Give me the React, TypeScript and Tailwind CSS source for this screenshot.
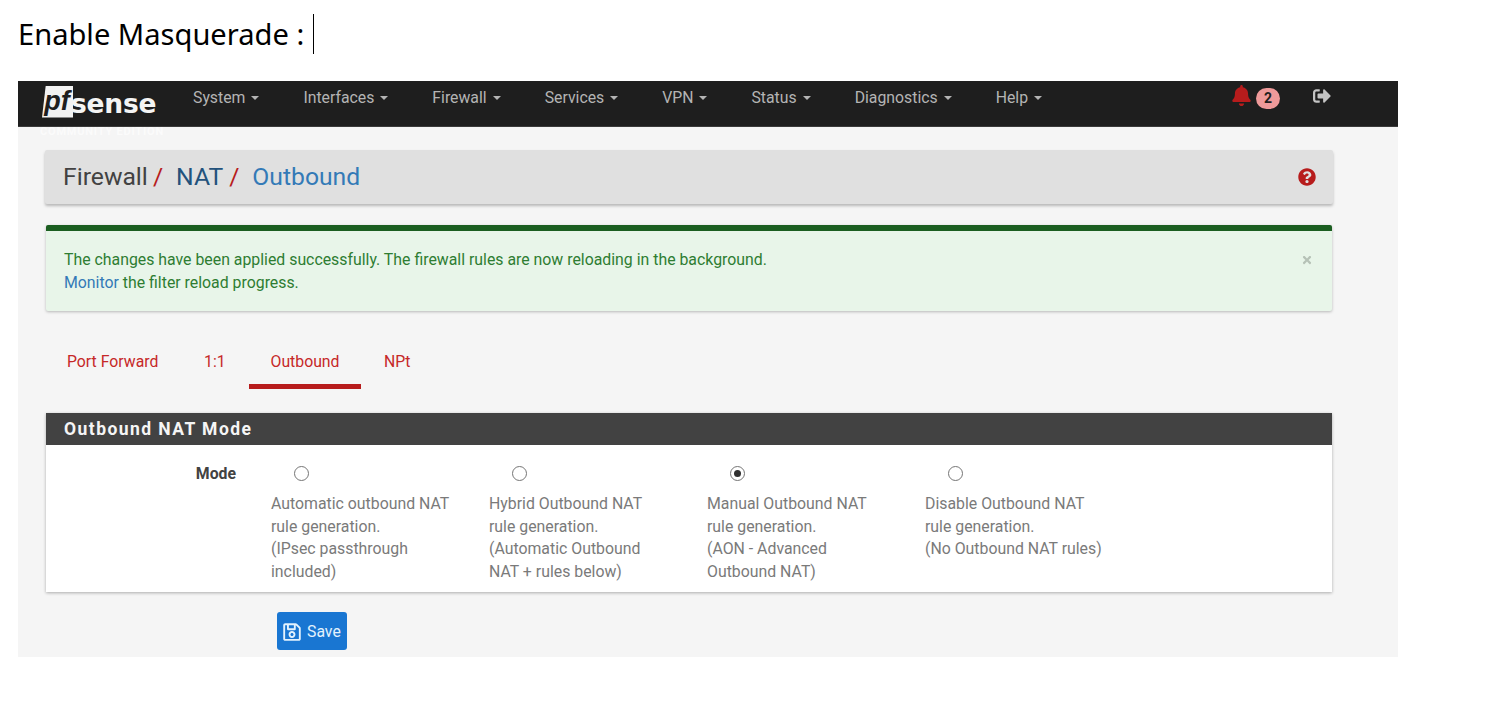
import React from "react";
import { FaBell, FaQuestionCircle, FaSignOutAlt, FaTimes, FaRegSave } from "react-icons/fa";

const navItems: [string, string][] = [
  ["System", "ml-[36px]"],
  ["Interfaces", "ml-[44px]"],
  ["Firewall", "ml-[44px]"],
  ["Services", "ml-[44px]"],
  ["VPN", "ml-[44px]"],
  ["Status", "ml-[44px]"],
  ["Diagnostics", "ml-[44px]"],
  ["Help", "ml-[44px]"],
];

const modes = [
  { lines: ["Automatic outbound NAT", "rule generation.", "(IPsec passthrough", "included)"], checked: false },
  { lines: ["Hybrid Outbound NAT", "rule generation.", "(Automatic Outbound", "NAT + rules below)"], checked: false },
  { lines: ["Manual Outbound NAT", "rule generation.", "(AON - Advanced", "Outbound NAT)"], checked: true },
  { lines: ["Disable Outbound NAT", "rule generation.", "(No Outbound NAT rules)"], checked: false },
];

function Caret() {
  return <span className="ml-[6px] inline-block h-0 w-0 border-x-[4px] border-t-[4px] border-x-transparent border-t-[#b4b4b4]" />;
}

function Logo() {
  return (
    <div className="mt-[4px] flex h-[33px] w-[115px] items-center">
      <span className="flex h-[32px] w-[31px] shrink-0 items-center justify-center bg-[#f2f2f2] pr-[1px] font-['Liberation_Sans',sans-serif] text-[27px] font-bold italic leading-none text-[#1e1e1e] [clip-path:polygon(12%_0,100%_0,100%_100%,0_100%)]">
        pf
      </span>
      <span className="-ml-[2px] mt-[6px] font-['DejaVu_Sans',sans-serif] text-[26.5px] font-bold leading-none tracking-[-0.2px] text-[#f4f4f4]">sense</span>
    </div>
  );
}

export default function App() {
  return (
    <div className="h-[714px] w-[1494px] overflow-hidden bg-white font-['Roboto',sans-serif]">
      <div className="flex h-[81px] items-start pl-[18px] pt-[14px]">
        <span className="font-['Noto_Sans',sans-serif] text-[29.1px] leading-[40px] text-black">Enable Masquerade :</span>
        <span className="ml-[9px] h-[40px] w-px bg-black" />
      </div>

      <div className="ml-[18px] h-[576px] w-[1380px] bg-[#f5f5f5]">
        <nav className="flex h-[46px] items-start border-b border-[#3a3a3a] bg-[#1e1e1e] pl-[24px]">
          <Logo />
          <div className="flex">
            {navItems.map(([label, ml]) => (
              <div key={label} className={`flex h-[34px] items-center text-[15.8px] text-[#b4b4b4] ${ml}`}>
                {label}
                <Caret />
              </div>
            ))}
          </div>
          <div className="ml-auto flex items-start pr-[67px] pt-[4px]">
            <FaBell className="text-[21px] text-[#b71c1c]" />
            <span className="ml-[4px] mt-[3px] flex h-[21px] w-[24px] items-center justify-center rounded-full bg-[#ef9a9a] text-[14px] font-bold text-[#1e1e1e]">2</span>
            <FaSignOutAlt className="ml-[33px] mt-[2px] text-[18px] text-[#c4c4c4]" />
          </div>
        </nav>

        <div className="ml-[22px] h-[10px] text-[11px] font-bold leading-[10px] tracking-[0.8px] text-[#fbfbfb]">COMMUNITY EDITION</div>

        <div className="ml-[27px] w-[1288px]">
          <div className="mt-[13px] flex h-[54px] items-center justify-between rounded-[2px] bg-[#e0e0e0] pl-[18px] pr-[17px] text-[24.7px] shadow-[0_2px_3px_rgba(0,0,0,0.25)]">
            <div>
              <span className="text-[#424242]">Firewall</span>
              <span className="ml-[5px] text-[#b71c1c]">/</span>
              <span className="ml-[13px] text-[#23527c]">NAT</span>
              <span className="ml-[6px] text-[#b71c1c]">/</span>
              <span className="ml-[13px] text-[#337ab7]">Outbound</span>
            </div>
            <FaQuestionCircle className="text-[18px] text-[#b71c1c]" />
          </div>

          <div className="ml-px mt-[21px] flex h-[86px] w-[1286px] justify-between rounded-[2px] border-t-[6px] border-[#1b5e20] bg-[#e8f5e9] pl-[18px] pr-[19px] pt-[17px] text-[15.85px] leading-[23px] text-[#2e7d32] shadow-[0_1px_3px_rgba(0,0,0,0.25)]">
            <div>
              <div>The changes have been applied successfully. The firewall rules are now reloading in the background.</div>
              <div>
                <span className="text-[#337ab7]">Monitor</span> the filter reload progress.
              </div>
            </div>
            <FaTimes className="mt-[6px] text-[12px] text-[#b6c2b7]" />
          </div>

          <div className="mt-[29px] flex whitespace-nowrap text-[15.8px] text-[#c62828]">
            <div className="flex h-[49px] w-[113px] items-center pb-[5px] pl-[22px]">Port Forward</div>
            <div className="flex h-[49px] w-[91px] items-center pb-[5px] pl-[46px]">1:1</div>
            <div className="flex h-[49px] w-[112px] items-center justify-center border-b-[5px] border-[#b71c1c]">Outbound</div>
            <div className="flex h-[49px] items-center pb-[5px] pl-[23px]">NPt</div>
          </div>

          <div className="ml-px mt-[24px] w-[1286px] bg-white shadow-[0_1px_3px_rgba(0,0,0,0.3)]">
            <div className="flex h-[32px] items-center bg-[#424242] pl-[18px] text-[17.5px] font-bold tracking-[1.45px] text-[#f5f5f5]">Outbound NAT Mode</div>
            <div className="flex h-[147px] pt-[19px]">
              <div className="w-[190px] text-right text-[15.8px] font-bold leading-[19px] text-[#424242]">Mode</div>
              <div className="ml-[35px] flex">
                {modes.map((m) => (
                  <div key={m.lines[0]} className="w-[218px]">
                    <div className="ml-[23px] mt-[2px] flex h-[15px] w-[15px] items-center justify-center rounded-full border border-[#757575]">
                      {m.checked && <span className="h-[7px] w-[7px] rounded-full bg-[#303030]" />}
                    </div>
                    <div className="mt-[12px] text-[15.85px] leading-[22.5px] text-[#7a7a7a]">
                      {m.lines.map((l) => (
                        <div key={l}>{l}</div>
                      ))}
                    </div>
                  </div>
                ))}
              </div>
            </div>
          </div>

          <button className="ml-[232px] mt-[20px] flex h-[38px] w-[70px] items-center gap-[5px] rounded-[3px] bg-[#1976d2] pl-[5px] pt-px text-[15.8px] text-[#e3f2fd]">
            <FaRegSave className="text-[20px]" />
            Save
          </button>
        </div>
      </div>
    </div>
  );
}
